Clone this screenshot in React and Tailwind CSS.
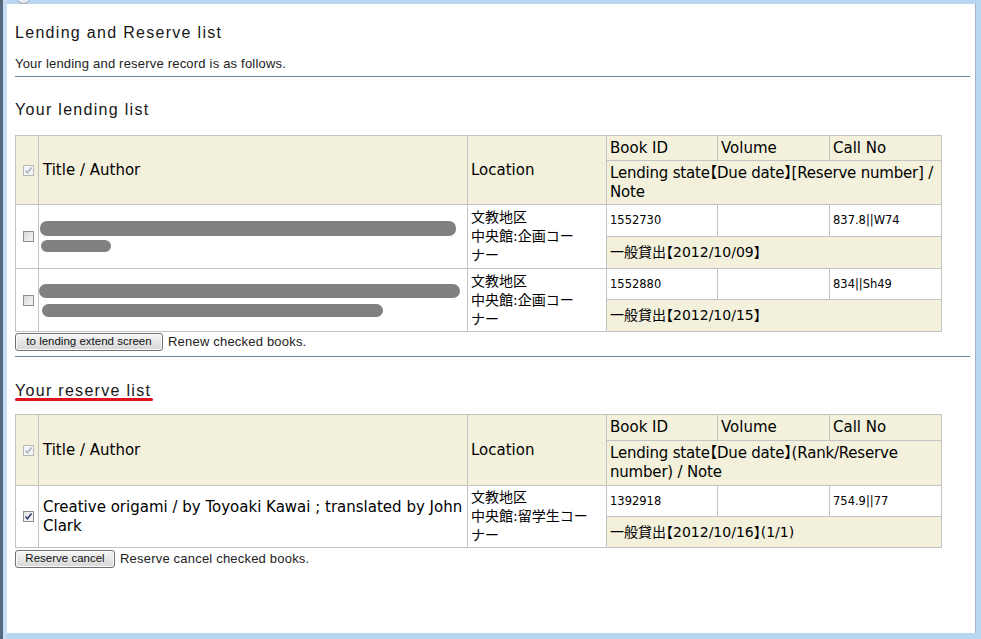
import clsx from "clsx";

const head = "font-['Liberation_Sans',sans-serif] text-[16px] leading-[20px] tracking-[1.3px] text-[#161616]";
const small = "font-['Liberation_Sans',sans-serif] text-[13px] leading-[16px] tracking-[0.2px] text-[#222]";
const cell = "border border-[#c3c3c3] align-middle p-0 pl-[3px]";
const beige = "bg-[#f3f1dc]";
const num = "text-[11.5px]";
const jp = "text-[14px] leading-[19px]";

function Box({ mode }) {
  return (
    <span
      className={clsx(
        "inline-flex w-[11px] h-[11px] border items-center justify-center align-middle",
        mode === "hdr" && "border-[#b8b8b8] bg-[#f5f5f5]",
        mode === "off" && "border-[#8e8e8e] bg-linear-to-br from-[#d9d9d9] to-[#f7f7f7]",
        mode === "on" && "border-[#8e8e8e] bg-linear-to-br from-[#e4e4e4] to-[#fbfbfb]"
      )}
    >
      {mode !== "off" && (
        <svg width="9" height="9" viewBox="0 0 9 9">
          <path
            d="M1.5 4.5 L3.5 6.8 L7.5 1.5"
            fill="none"
            stroke={mode === "hdr" ? "#a9b2c4" : "#2d3f6c"}
            strokeWidth="1.6"
          />
        </svg>
      )}
    </span>
  );
}

function Bar({ w, h, ml, mt = 0 }) {
  return <div className="bg-[#808080] rounded-[7px]" style={{ width: w, height: h, marginLeft: ml, marginTop: mt }} />;
}

function Cols() {
  return (
    <colgroup>
      <col className="w-[23px]" />
      <col className="w-[429px]" />
      <col className="w-[139px]" />
      <col className="w-[111px]" />
      <col className="w-[112px]" />
      <col className="w-[112px]" />
    </colgroup>
  );
}

function HeaderRows({ state, h1, h2 }) {
  return (
    <>
      <tr style={{ height: h1 }}>
        <td rowSpan={2} className={clsx(cell, beige, "pl-0 text-center")}>
          <Box mode="hdr" />
        </td>
        <td rowSpan={2} className={clsx(cell, beige, "pl-[4px]")}>Title / Author</td>
        <td rowSpan={2} className={clsx(cell, beige)}>Location</td>
        <td className={clsx(cell, beige)}>Book ID</td>
        <td className={clsx(cell, beige)}>Volume</td>
        <td className={clsx(cell, beige)}>Call No</td>
      </tr>
      <tr style={{ height: h2 }}>
        <td colSpan={3} className={clsx(cell, beige, "whitespace-nowrap tracking-[-0.2px]")}>
          {state[0]}
          <br />
          {state[1]}
        </td>
      </tr>
    </>
  );
}

function ItemRows({ check, title, loc, id, callNo, status, h1, h2 }) {
  return (
    <>
      <tr style={{ height: h1 }}>
        <td rowSpan={2} className={clsx(cell, "pl-0 text-center")}>
          <Box mode={check} />
        </td>
        <td rowSpan={2} className={clsx(cell, "pl-[4px]")}>{title}</td>
        <td rowSpan={2} className={clsx(cell, jp)}>
          文教地区
          <br />
          {loc}
          <br />
          ナー
        </td>
        <td className={clsx(cell, num)}>{id}</td>
        <td className={cell}></td>
        <td className={clsx(cell, num)}>{callNo}</td>
      </tr>
      <tr style={{ height: h2 }}>
        <td colSpan={3} className={clsx(cell, beige, "text-[14px]")}>{status}</td>
      </tr>
    </>
  );
}

function Button({ w, children }) {
  return (
    <span
      className="inline-flex items-center justify-center h-[18px] border border-[#707070] rounded-[3px] bg-linear-to-b from-[#f7f7f7] to-[#d6d6d6] shadow-[inset_0_0_0_1px_#fcfcfc] text-[11.5px] text-[#111] font-['Liberation_Sans',sans-serif]"
      style={{ width: w }}
    >
      {children}
    </span>
  );
}

// "halt" keeps the full-width brackets at half width, as in the original font
const tableCls =
  "border-collapse table-fixed w-[926px] text-[15px] leading-[19px] text-black font-['DejaVu_Sans','Noto_Sans_CJK_JP',sans-serif] [font-feature-settings:'halt']";

export default function App() {
  return (
    <div className="relative w-[981px] h-[639px] overflow-hidden bg-[#b8d6f1] flex">
      <div className="absolute left-[16px] top-[-11px] w-[15px] h-[15px] rounded-full border border-[#9aa0a8] bg-[#e8ecf0]" />
      <div className="w-[3px] bg-[#55687e]" />
      <div className="w-[4px] bg-[#c6ddf3]" />
      <div className="flex-1 mt-[4px] mb-[6px] mr-[5px] bg-white border-r border-[#a5b3c2] pl-[8px] pr-[5px] pt-[19px]">
        <div className={head}>Lending and Reserve list</div>
        <div className={clsx(small, "mt-[13px]")}>Your lending and reserve record is as follows.</div>
        <div className="mt-[4px] h-px bg-[#74869a]" />

        <div className={clsx(head, "mt-[23px]")}>Your lending list</div>
        <table className={clsx(tableCls, "mt-[15px]")}>
          <Cols />
          <tbody>
            <HeaderRows state={["Lending state【Due date】[Reserve number] /", "Note"]} h1={25} h2={44} />
            <ItemRows
              check="off"
              title={
                <div className="-ml-[4px]">
                  <Bar w={416} h={15} ml={1} />
                  <Bar w={70} h={12} ml={2} mt={4} />
                </div>
              }
              loc="中央館:企画コー"
              id="1552730"
              callNo="837.8||W74"
              status="一般貸出【2012/10/09】"
              h1={32}
              h2={32}
            />
            <ItemRows
              check="off"
              title={
                <div className="-ml-[4px]">
                  <Bar w={421} h={14} ml={0} />
                  <Bar w={341} h={13} ml={3} mt={6} />
                </div>
              }
              loc="中央館:企画コー"
              id="1552880"
              callNo="834||Sh49"
              status="一般貸出【2012/10/15】"
              h1={31}
              h2={32}
            />
          </tbody>
        </table>
        <div className="mt-[1px] flex items-center gap-[5px]">
          <Button w={148}>to lending extend screen</Button>
          <span className={small}>Renew checked books.</span>
        </div>
        <div className="mt-[5px] h-px bg-[#74869a]" />

        <div className={clsx(head, "mt-[24px] relative w-fit")}>
          Your reserve list
          <div className="absolute left-0 right-[-2px] top-[17px] h-[3px] rounded-full bg-[#e0141e]" />
        </div>
        <table className={clsx(tableCls, "mt-[13px]")}>
          <Cols />
          <tbody>
            <HeaderRows state={["Lending state【Due date】(Rank/Reserve", "number) / Note"]} h1={26} h2={45} />
            <ItemRows
              check="on"
              title={
                <span className="whitespace-nowrap">
                  Creative origami / by Toyoaki Kawai ; translated by John
                  <br />
                  Clark
                </span>
              }
              loc="中央館:留学生コー"
              id="1392918"
              callNo="754.9||77"
              status="一般貸出【2012/10/16】(1/1)"
              h1={31}
              h2={31}
            />
          </tbody>
        </table>
        <div className="mt-[2px] flex items-center gap-[5px]">
          <Button w={100}>Reserve cancel</Button>
          <span className={small}>Reserve cancel checked books.</span>
        </div>
      </div>
    </div>
  );
}
